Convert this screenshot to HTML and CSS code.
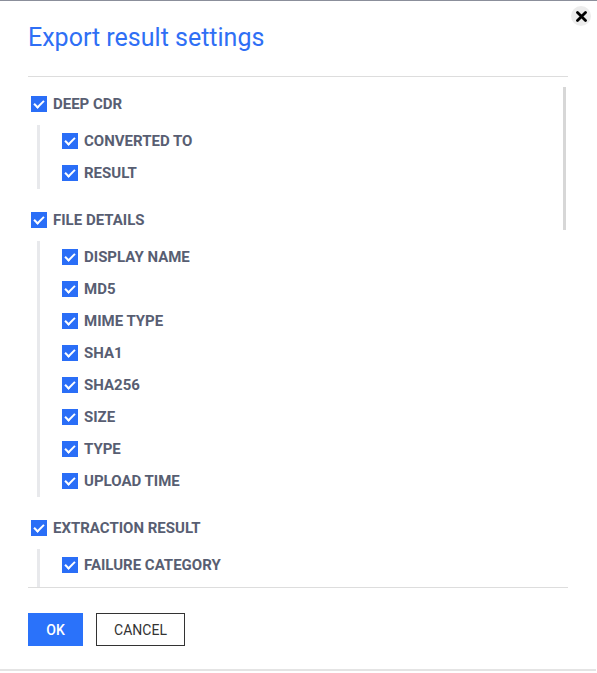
FILE: index.html
```html
<!DOCTYPE html>
<html>
    <head>
        <title>Export result settings</title>
        <meta charset="UTF-8">
        <link rel="stylesheet" href="styles.css">
    </head>
    <body>
        <div class="modal">
            <button class="fechar" title="Close">
                <svg width="11" height="11" viewBox="0 0 11 11">
                    <path d="M1.5 1.5 L9.5 9.5 M9.5 1.5 L1.5 9.5" stroke="#000" stroke-width="2.8" stroke-linecap="round"/>
                </svg>
            </button>
            <h2 class="titulo">Export result settings</h2>

            <div class="lista-caixa">
                <div class="lista">
                    <div class="secao">
                        <label class="item"><input type="checkbox" class="cb" checked> DEEP CDR</label>
                        <div class="filhos">
                            <label class="item"><input type="checkbox" class="cb" checked> CONVERTED TO</label>
                            <label class="item"><input type="checkbox" class="cb" checked> RESULT</label>
                        </div>
                    </div>
                    <div class="secao">
                        <label class="item"><input type="checkbox" class="cb" checked> FILE DETAILS</label>
                        <div class="filhos">
                            <label class="item"><input type="checkbox" class="cb" checked> DISPLAY NAME</label>
                            <label class="item"><input type="checkbox" class="cb" checked> MD5</label>
                            <label class="item"><input type="checkbox" class="cb" checked> MIME TYPE</label>
                            <label class="item"><input type="checkbox" class="cb" checked> SHA1</label>
                            <label class="item"><input type="checkbox" class="cb" checked> SHA256</label>
                            <label class="item"><input type="checkbox" class="cb" checked> SIZE</label>
                            <label class="item"><input type="checkbox" class="cb" checked> TYPE</label>
                            <label class="item"><input type="checkbox" class="cb" checked> UPLOAD TIME</label>
                        </div>
                    </div>
                    <div class="secao">
                        <label class="item"><input type="checkbox" class="cb" checked> EXTRACTION RESULT</label>
                        <div class="filhos">
                            <label class="item"><input type="checkbox" class="cb" checked> FAILURE CATEGORY</label>
                            <div class="item-vazio"></div>
                        </div>
                    </div>
                </div>
                <div class="barra-rolagem"></div>
            </div>

            <div class="rodape">
                <button class="botao botao-ok">OK</button>
                <button class="botao botao-cancelar">CANCEL</button>
            </div>
        </div>
    </body>
</html>
```

FILE: styles.css
```css
* {
    margin: 0;
    padding: 0;
    box-sizing: border-box;
    font-family: Roboto, "Liberation Sans", sans-serif;
}
body {
    background-color: #ffffff;
    border-top: 1px solid #8b8f9b;
}
.modal {
    position: relative;
    width: 596px;
    height: 670px;
    padding: 21px 28px 0 28px;
    background-color: #ffffff;
    border-bottom: 2px solid #e4e4e4;
}
.fechar {
    position: absolute;
    top: 5px;
    right: 5px;
    width: 20px;
    height: 20px;
    display: flex;
    justify-content: center;
    align-items: center;
    border: none;
    border-radius: 50%;
    background-color: #ececec;
    cursor: pointer;
}
.titulo {
    font-size: 25px;
    font-weight: normal;
    line-height: 32px;
    color: #2f6ff5;
    margin-bottom: 22px;
}
.lista-caixa {
    position: relative;
    border-top: 1px solid #dddddd;
    border-bottom: 1px solid #dddddd;
}
.lista {
    height: 510px;
    overflow: hidden;
    padding: 11px 0 10px 3px;
}
.barra-rolagem {
    position: absolute;
    top: 10px;
    right: 2px;
    width: 3px;
    height: 143px;
    background-color: #d7d7d7;
}
.secao {
    margin-bottom: 15px;
}
.item {
    display: flex;
    align-items: center;
    gap: 6px;
    height: 32px;
    font-size: 15px;
    font-weight: bold;
    color: #585e72;
    cursor: pointer;
}
.item-vazio {
    height: 32px;
}
.filhos {
    margin-top: 5px;
    margin-left: 6px;
    padding-left: 22px;
    border-left: 3px solid #e8e9ec;
}
.cb {
    appearance: none;
    -webkit-appearance: none;
    position: relative;
    width: 16px;
    height: 16px;
    flex-shrink: 0;
    background-color: #2a6ef7;
    cursor: pointer;
}
.cb:checked::after {
    content: "";
    position: absolute;
    left: 5px;
    top: 2px;
    width: 4px;
    height: 8px;
    border-right: 2px solid #ffffff;
    border-bottom: 2px solid #ffffff;
    transform: rotate(45deg);
}
.rodape {
    display: flex;
    gap: 13px;
    padding-top: 25px;
}
.botao {
    height: 33px;
    font-size: 14px;
    cursor: pointer;
}
.botao-ok {
    width: 55px;
    border: none;
    background-color: #2a72fa;
    color: #ffffff;
    font-weight: 500;
}
.botao-cancelar {
    width: 89px;
    border: 1px solid #333333;
    background-color: #ffffff;
    color: #333333;
}
```
